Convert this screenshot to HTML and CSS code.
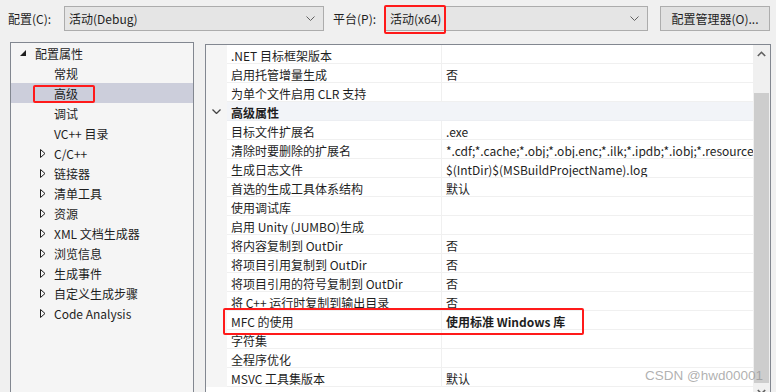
FILE: index.html
```html
<!DOCTYPE html>
<html lang="zh-CN">
<head>
<meta charset="utf-8">
<title>属性页</title>
<link rel="stylesheet" href="styles.css">
</head>
<body>
<div class="page">
  <div class="toolbar">
    <span class="lbl lbl-config">配置(C):</span>
    <div class="combo combo-config"><span>活动(Debug)</span>
      <svg class="chev" width="9" height="5" viewBox="0 0 9 5"><path d="M0.5 0.5 L4.5 4.5 L8.5 0.5" fill="none" stroke="#606060" stroke-width="1"/></svg>
    </div>
    <span class="lbl lbl-platform">平台(P):</span>
    <div class="combo combo-platform"><span>活动(x64)</span>
      <svg class="chev" width="9" height="5" viewBox="0 0 9 5"><path d="M0.5 0.5 L4.5 4.5 L8.5 0.5" fill="none" stroke="#606060" stroke-width="1"/></svg>
    </div>
    <div class="btn">配置管理器(O)...</div>
  </div>

  <div class="main">
    <div class="tree">
      <div class="node root"><span class="tg"><svg width="6" height="6" viewBox="0 0 6 6"><polygon points="6,0 6,6 0,6" fill="#1e1e1e"/></svg></span>配置属性</div>
      <div class="node child"><span class="tg"></span>常规</div>
      <div class="node child selected"><span class="tg"></span>高级</div>
      <div class="node child"><span class="tg"></span>调试</div>
      <div class="node child"><span class="tg"></span>VC++ 目录</div>
      <div class="node child"><span class="tg"><svg width="6" height="9" viewBox="0 0 6 9"><polygon points="0.5,0.5 5,4.5 0.5,8.5" fill="none" stroke="#1e1e1e" stroke-width="1"/></svg></span>C/C++</div>
      <div class="node child"><span class="tg"><svg width="6" height="9" viewBox="0 0 6 9"><polygon points="0.5,0.5 5,4.5 0.5,8.5" fill="none" stroke="#1e1e1e" stroke-width="1"/></svg></span>链接器</div>
      <div class="node child"><span class="tg"><svg width="6" height="9" viewBox="0 0 6 9"><polygon points="0.5,0.5 5,4.5 0.5,8.5" fill="none" stroke="#1e1e1e" stroke-width="1"/></svg></span>清单工具</div>
      <div class="node child"><span class="tg"><svg width="6" height="9" viewBox="0 0 6 9"><polygon points="0.5,0.5 5,4.5 0.5,8.5" fill="none" stroke="#1e1e1e" stroke-width="1"/></svg></span>资源</div>
      <div class="node child"><span class="tg"><svg width="6" height="9" viewBox="0 0 6 9"><polygon points="0.5,0.5 5,4.5 0.5,8.5" fill="none" stroke="#1e1e1e" stroke-width="1"/></svg></span>XML 文档生成器</div>
      <div class="node child"><span class="tg"><svg width="6" height="9" viewBox="0 0 6 9"><polygon points="0.5,0.5 5,4.5 0.5,8.5" fill="none" stroke="#1e1e1e" stroke-width="1"/></svg></span>浏览信息</div>
      <div class="node child"><span class="tg"><svg width="6" height="9" viewBox="0 0 6 9"><polygon points="0.5,0.5 5,4.5 0.5,8.5" fill="none" stroke="#1e1e1e" stroke-width="1"/></svg></span>生成事件</div>
      <div class="node child"><span class="tg"><svg width="6" height="9" viewBox="0 0 6 9"><polygon points="0.5,0.5 5,4.5 0.5,8.5" fill="none" stroke="#1e1e1e" stroke-width="1"/></svg></span>自定义生成步骤</div>
      <div class="node child"><span class="tg"><svg width="6" height="9" viewBox="0 0 6 9"><polygon points="0.5,0.5 5,4.5 0.5,8.5" fill="none" stroke="#1e1e1e" stroke-width="1"/></svg></span>Code Analysis</div>
    </div>

    <div class="grid">
      <div class="grid-body">
        <div class="row"><div class="gut"></div><div class="name">.NET 目标框架版本</div><div class="val"></div></div>
        <div class="row"><div class="gut"></div><div class="name">启用托管增量生成</div><div class="val">否</div></div>
        <div class="row"><div class="gut"></div><div class="name">为单个文件启用 CLR 支持</div><div class="val"></div></div>
        <div class="row cat"><div class="gut"><svg width="9" height="5" viewBox="0 0 9 5"><path d="M0.5 0.5 L4.5 4.5 L8.5 0.5" fill="none" stroke="#444" stroke-width="1.3"/></svg></div><div class="name">高级属性</div></div>
        <div class="row"><div class="gut"></div><div class="name">目标文件扩展名</div><div class="val">.exe</div></div>
        <div class="row"><div class="gut"></div><div class="name">清除时要删除的扩展名</div><div class="val">*.cdf;*.cache;*.obj;*.obj.enc;*.ilk;*.ipdb;*.iobj;*.resource</div></div>
        <div class="row"><div class="gut"></div><div class="name">生成日志文件</div><div class="val">$(IntDir)$(MSBuildProjectName).log</div></div>
        <div class="row"><div class="gut"></div><div class="name">首选的生成工具体系结构</div><div class="val">默认</div></div>
        <div class="row"><div class="gut"></div><div class="name">使用调试库</div><div class="val"></div></div>
        <div class="row"><div class="gut"></div><div class="name">启用 Unity (JUMBO)生成</div><div class="val"></div></div>
        <div class="row"><div class="gut"></div><div class="name">将内容复制到 OutDir</div><div class="val">否</div></div>
        <div class="row"><div class="gut"></div><div class="name">将项目引用复制到 OutDir</div><div class="val">否</div></div>
        <div class="row"><div class="gut"></div><div class="name">将项目引用的符号复制到 OutDir</div><div class="val">否</div></div>
        <div class="row"><div class="gut"></div><div class="name">将 C++ 运行时复制到输出目录</div><div class="val">否</div></div>
        <div class="row"><div class="gut"></div><div class="name">MFC 的使用</div><div class="val bold">使用标准 Windows 库</div></div>
        <div class="row"><div class="gut"></div><div class="name">字符集</div><div class="val"></div></div>
        <div class="row"><div class="gut"></div><div class="name">全程序优化</div><div class="val"></div></div>
        <div class="row"><div class="gut"></div><div class="name">MSVC 工具集版本</div><div class="val">默认</div></div>
      </div>
      <div class="scrollbar">
        <div class="sb-arrow"><svg width="9" height="6" viewBox="0 0 9 6"><path d="M0.8 5 L4.5 1.3 L8.2 5" fill="none" stroke="#606060" stroke-width="1.6"/></svg></div>
        <div class="sb-gap"></div>
        <div class="sb-thumb"></div>
        <div class="sb-arrow"><svg width="9" height="6" viewBox="0 0 9 6"><path d="M0.8 1 L4.5 4.7 L8.2 1" fill="none" stroke="#606060" stroke-width="1.6"/></svg></div>
      </div>
    </div>
  </div>

  <div class="mark mark-platform"></div>
  <div class="mark mark-adv"></div>
  <div class="mark mark-mfc"></div>
  <div class="watermark">CSDN @hwd00001</div>
</div>
</body>
</html>
```

FILE: styles.css
```css
* { box-sizing: border-box; }
html, body { margin: 0; padding: 0; }
body {
  background: #f0f0f0;
  font-family: "Noto Sans CJK SC", "Noto Sans", sans-serif;
  font-size: 12px;
  color: #1e1e1e;
}
.page {
  position: relative;
  width: 776px;
  height: 392px;
  overflow: hidden;
}

/* toolbar */
.toolbar {
  display: flex;
  align-items: center;
  height: 37px;
  padding: 6px 0 6px 8px;
}
.lbl { white-space: nowrap; line-height: 25px; }
.lbl-config { width: 56px; }
.lbl-platform { width: 52px; margin-left: 9px; }
.combo {
  display: flex;
  align-items: center;
  justify-content: space-between;
  height: 25px;
  padding: 0 8px 0 4px;
  background: #e5e5e5;
  border: 1px solid #acacac;
  white-space: nowrap;
}
.combo-config { width: 260px; }
.combo-platform { width: 263px; }
.btn {
  width: 110px;
  height: 25px;
  margin-left: 12px;
  line-height: 23px;
  text-align: center;
  background: #e1e1e1;
  border: 1px solid #adadad;
  white-space: nowrap;
}

/* main */
.main {
  display: flex;
  align-items: flex-start;
  gap: 11px;
  padding-left: 10px;
  margin-top: 5px;
}
.tree {
  width: 184px;
  height: 360px;
  background: #f5f5f5;
  border: 1px solid #828790;
}
.node {
  display: flex;
  align-items: center;
  height: 20px;
  white-space: nowrap;
}
.node.root { padding-left: 9px; }
.node.child { padding-left: 28px; }
.tg {
  display: flex;
  align-items: center;
  width: 15px;
  height: 20px;
}
.node.root .tg svg { margin-top: -1px; }
.node.child .tg svg { margin-left: 1px; }
.node.selected { background: #cccedb; }

/* grid */
.grid {
  display: flex;
  width: 566px;
  height: 360px;
  margin-top: 2px;
  background: #fff;
  border: 1px solid #828790;
}
.grid-body {
  flex: 1;
  min-width: 0;
  overflow: hidden;
}
.row {
  display: flex;
  height: 19px;
  white-space: nowrap;
}
.gut {
  width: 21px;
  flex: none;
  background: #f5f5f5;
  display: flex;
  align-items: center;
  justify-content: center;
}
.name {
  width: 214px;
  flex: none;
  padding: 1px 0 0 4px;
  line-height: 19px;
  border-bottom: 1px solid #f0f0f0;
  overflow: hidden;
}
.val {
  flex: 1;
  min-width: 0;
  padding: 1px 0 0 4px;
  line-height: 19px;
  border-left: 1px solid #f0f0f0;
  border-bottom: 1px solid #f0f0f0;
  overflow: hidden;
}
.val.bold { font-weight: bold; }
.row.cat .name {
  flex: 1;
  width: auto;
  font-weight: bold;
  background: #f2f4f8;
  border-bottom: 1px solid #eceef2;
}
.scrollbar {
  width: 17px;
  flex: none;
  display: flex;
  flex-direction: column;
  background: #f0f0f0;
}
.sb-arrow {
  height: 17px;
  display: flex;
  align-items: center;
  justify-content: center;
  flex: none;
}
.sb-gap { height: 31px; flex: none; }
.sb-thumb {
  height: 290px;
  flex: none;
  margin: 0 1px 0 1px;
  background: #cdcdcd;
}

/* annotations */
.mark {
  position: absolute;
  border: 2px solid #ff1a1a;
  border-radius: 2px;
}
.mark-platform { left: 384px; top: 5px; width: 62px; height: 29px; }
.mark-adv { left: 33px; top: 85px; width: 62px; height: 18px; }
.mark-mfc { left: 223px; top: 308px; width: 361px; height: 27px; }
.watermark {
  position: absolute;
  left: 645px;
  top: 368px;
  font-family: "Liberation Sans", Arial, sans-serif;
  font-size: 13.5px;
  color: rgba(150, 150, 150, 0.75);
  white-space: nowrap;
}
```
